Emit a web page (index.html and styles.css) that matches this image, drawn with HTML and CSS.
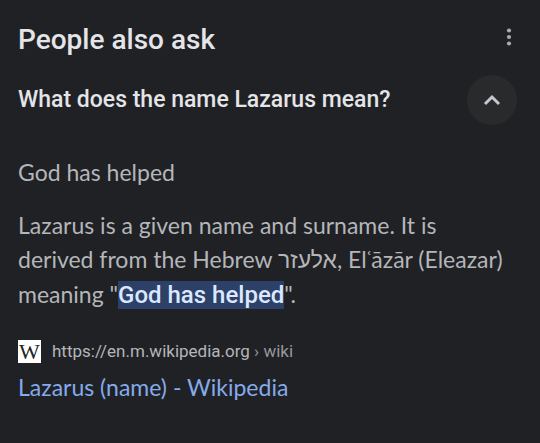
FILE: index.html
```html
<!DOCTYPE html>
<html lang="en">

<head>
    <meta charset="utf-8">
    <meta name="viewport" content="width=device-width, initial-scale=1">
    <title>People also ask</title>
    <link rel="stylesheet" href="styles.css">
</head>

<body>
    <main class="card">
        <div class="header">
            <h1>People also ask</h1>
            <button class="more" type="button" aria-label="More options">
                <svg width="6" height="18" viewBox="0 0 6 18">
                    <circle cx="3" cy="2.5" r="2.1" />
                    <circle cx="3" cy="9" r="2.1" />
                    <circle cx="3" cy="15.5" r="2.1" />
                </svg>
            </button>
        </div>

        <div class="question">
            <h2>What does the name Lazarus mean?</h2>
            <button class="toggle" type="button" aria-label="Collapse" aria-expanded="true" aria-controls="answer">
                <svg width="18" height="12" viewBox="0 0 18 12">
                    <path d="M2 10L9 3L16 10" />
                </svg>
            </button>
        </div>

        <div class="answer" id="answer">
            <p class="short">God has helped</p>
            <p class="text">Lazarus is a given name and surname. It is derived from the Hebrew <bdi class="hebrew" lang="he">אלעזר</bdi>, Elʿāzār (Eleazar) meaning "<mark>God has helped</mark>".</p>
        </div>

        <div class="source">
            <div class="cite">
                <span class="favicon">W</span>
                <cite>https://en.m.wikipedia.org <span class="path">› wiki</span></cite>
            </div>
            <a href="#">Lazarus (name) - Wikipedia</a>
        </div>
    </main>
</body>

</html>
```
FILE: styles.css
```css
* {
    margin: 0;
    padding: 0;
    box-sizing: border-box;
}

body {
    background-color: #202124;
    color: #b4b6ba;
    font-family: Lato, Roboto, sans-serif;
    font-size: 23px;
    line-height: 34px;
}

.card {
    padding: 20px 23px 20px 18px;
}

h1,
h2 {
    color: #e4e5e8;
    font-family: Roboto, sans-serif;
    font-weight: 500;
}

h1 {
    font-size: 28px;
    line-height: 40px;
}

h2 {
    font-size: 23px;
}

button {
    border: none;
    background: none;
    cursor: pointer;
}

.header,
.question {
    display: flex;
    align-items: center;
    justify-content: space-between;
}

.header {
    margin-bottom: 15px;
}

.more {
    display: flex;
    padding: 4px 5px 10px;
}

.more svg {
    fill: #a9abaf;
}

.toggle {
    display: flex;
    flex: none;
    align-items: center;
    justify-content: center;
    width: 50px;
    height: 50px;
    border-radius: 50%;
    background-color: #292a2c;
}

.toggle svg {
    fill: none;
    stroke: #c4c6d0;
    stroke-width: 3;
}

.answer {
    margin-top: 30px;
}

.short {
    margin-bottom: 19px;
}

.hebrew {
    font-family: "Liberation Sans", sans-serif;
}

mark {
    background-color: #2d4168;
    color: #dce8ff;
    font-family: Roboto, sans-serif;
    font-size: 24px;
    font-weight: 500;
    line-height: 28px;
}

.source {
    margin-top: 27px;
}

.cite {
    display: flex;
    align-items: center;
    gap: 11px;
    margin-bottom: 6px;
    font-family: Roboto, sans-serif;
    font-size: 17px;
    line-height: 26px;
}

cite {
    font-style: normal;
}

.path {
    color: #96989c;
}

.favicon {
    width: 23px;
    height: 23px;
    background-color: #fff;
    color: #222;
    font-family: "Liberation Serif", serif;
    font-size: 22px;
    line-height: 24px;
    text-align: center;
}

a {
    color: #84abeb;
    text-decoration: none;
}
```
